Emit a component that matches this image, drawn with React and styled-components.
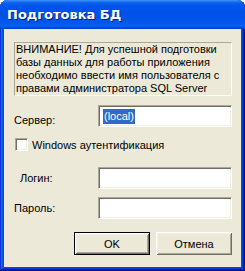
import React from "react";
import styled, { createGlobalStyle } from "styled-components";

const Global = createGlobalStyle`
  html, body { margin: 0; padding: 0; background: #ffffff; }
  * { box-sizing: border-box; }
`;

const font = `"Liberation Sans", "DejaVu Sans", sans-serif`;

const Window = styled.div`
  width: 245px;
  height: 271px;
  display: flex;
  flex-direction: column;
  background: #0a4be0;
  border-radius: 8px 8px 0 0;
  padding: 0 4px 4px;
  box-shadow: inset -1px -1px #00138c, inset 1px 1px #0831d9,
    inset -2px -2px #001ea0, inset 2px 2px #166aee,
    inset -3px -3px #003bda, inset 3px 3px #0855dd;
  font-family: ${font};
  font-size: 11px;
  color: #000;
`;

const TitleBar = styled.div`
  height: 29px;
  margin: 0 -4px;
  padding-left: 7px;
  display: flex;
  align-items: center;
  border-radius: 8px 8px 0 0;
  background: linear-gradient(
    180deg,
    #3d95ff 0%,
    #0a5fe8 10%,
    #0053ee 25%,
    #0050e6 50%,
    #0158ec 80%,
    #0662f4 90%,
    #0045d8 96%,
    #003dd0 100%
  );
  color: #fff;
  font-family: "DejaVu Sans", "Liberation Sans", sans-serif;
  font-weight: bold;
  font-size: 13px;
  text-shadow: 1px 1px #0a1a8c;
`;

const Client = styled.div`
  flex: 1;
  background: #ece9d8;
  padding: 13px 9px 0 10px;
  display: flex;
  flex-direction: column;
`;

const Notice = styled.div`
  border-top: 1px solid #aca899;
  border-left: 1px solid #aca899;
  border-bottom: 1px solid #fff;
  border-right: 1px solid #fff;
  padding: 0 0 0 1px;
  line-height: 13px;
  white-space: nowrap;
`;

const Row = styled.div`
  display: grid;
  grid-template-columns: 84px 134px;
  align-items: ${(p) => p.$align || "center"};
  margin-top: ${(p) => p.$top}px;
`;

const Label = styled.span`
  padding-left: ${(p) => p.$indent || 0}px;
  padding-bottom: ${(p) => p.$bottom || 0}px;
`;

const Field = styled.div`
  height: 22px;
  background: #fff;
  border-style: solid;
  border-width: 1px;
  border-color: #aca899 #fff #fff #aca899;
  box-shadow: inset 1px 1px #716f64, inset -1px -1px #f1efe2;
  padding: 3px 0 0 4px;
  line-height: 14px;
`;

const Selected = styled.span`
  background: #316ac5;
  color: #fff;
  display: inline-block;
  padding: 0 1px;
  line-height: 15px;
`;

const CheckRow = styled.label`
  display: flex;
  align-items: center;
  gap: 4px;
  margin-top: 11px;
  padding-left: 1px;
`;

const Box = styled.span`
  width: 13px;
  height: 13px;
  background: #fff;
  border-style: solid;
  border-width: 1px;
  border-color: #aca899 #fff #fff #aca899;
  box-shadow: inset 1px 1px #716f64, inset -1px -1px #f1efe2;
`;

const Buttons = styled.div`
  display: flex;
  justify-content: flex-end;
  gap: 6px;
  margin-top: 13px;
`;

const Button = styled.button`
  width: 76px;
  height: 23px;
  padding: 0;
  margin: 0;
  background: #ece9d8;
  font-family: ${font};
  font-size: 11px;
  color: #000;
  border: ${(p) => (p.$default ? "1px solid #000" : "none")};
  box-shadow: inset 1px 1px #fff, inset -1px -1px #716f64,
    inset 2px 2px #f1efe2, inset -2px -2px #aca899;
`;

export default function App() {
  return (
    <>
      <Global />
      <Window>
        <TitleBar>Подготовка БД</TitleBar>
        <Client>
          <Notice>
            ВНИМАНИЕ! Для успешной подготовки
            <br />
            базы данных для работы приложения
            <br />
            необходимо ввести имя пользователя с
            <br />
            правами администратора SQL Server
          </Notice>
          <Row $top={9} $align="end">
            <Label $bottom={1}>Сервер:</Label>
            <Field>
              <Selected>(local)</Selected>
            </Field>
          </Row>
          <CheckRow>
            <Box />
            <span>Windows аутентификация</span>
          </CheckRow>
          <Row $top={16}>
            <Label $indent={6}>Логин:</Label>
            <Field />
          </Row>
          <Row $top={8}>
            <Label>Пароль:</Label>
            <Field />
          </Row>
          <Buttons>
            <Button $default>OK</Button>
            <Button>Отмена</Button>
          </Buttons>
        </Client>
      </Window>
    </>
  );
}
